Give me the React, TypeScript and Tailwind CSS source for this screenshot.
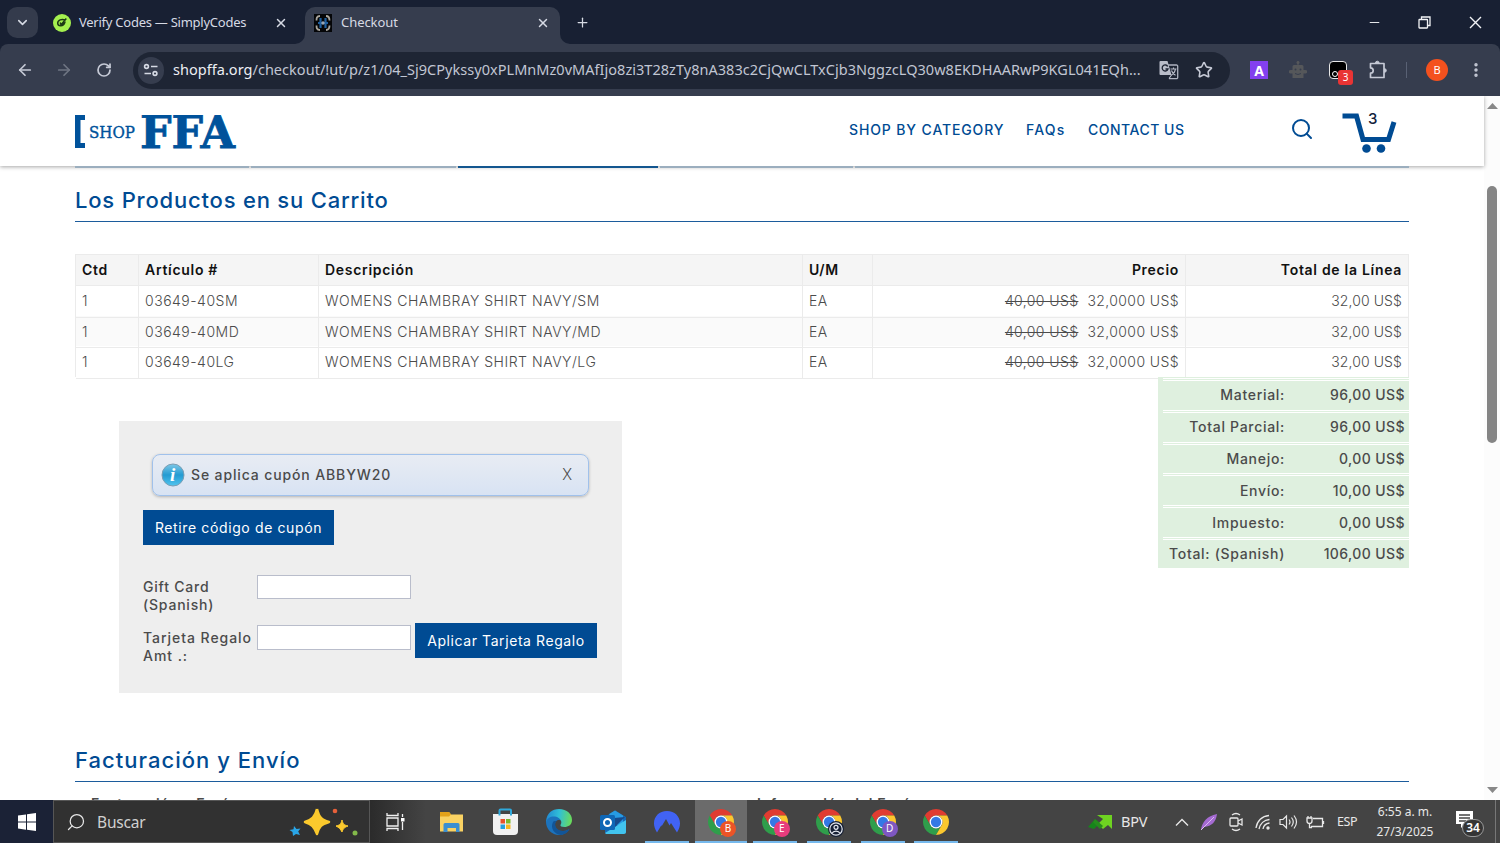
import type { ReactNode } from 'react';
import { ChevronDown, X, Plus, ArrowLeft, ArrowRight, RotateCw, Star, Minus, Search, EllipsisVertical } from 'lucide-react';

const URL_PATH = '/checkout/!ut/p/z1/04_Sj9CPykssy0xPLMnMz0vMAfIjo8zi3T28zTy8nA383c2CjQwCLTxCjb3NggzcLQ30w8EKDHAARwP9KGL041EQh...';

const items = [
  { qty: '1', sku: '03649-40SM', name: 'WOMENS CHAMBRAY SHIRT NAVY/SM' },
  { qty: '1', sku: '03649-40MD', name: 'WOMENS CHAMBRAY SHIRT NAVY/MD' },
  { qty: '1', sku: '03649-40LG', name: 'WOMENS CHAMBRAY SHIRT NAVY/LG' },
];

const totals = [
  { label: 'Material:', value: '96,00 US$' },
  { label: 'Total Parcial:', value: '96,00 US$' },
  { label: 'Manejo:', value: '0,00 US$' },
  { label: 'Envío:', value: '10,00 US$' },
  { label: 'Impuesto:', value: '0,00 US$' },
  { label: 'Total: (Spanish)', value: '106,00 US$' },
];

const COLS = 'grid grid-cols-[63px_180px_484px_70px_313px_223px]';

function TabStrip() {
  return (
    <div className="flex h-11 bg-[#182033] text-[#d6dae4]">
      <div className="mt-[7px] ml-[7px] flex h-[31px] w-[31px] items-center justify-center rounded-[10px] bg-[#343b4c]">
        <ChevronDown size={15} strokeWidth={2.5} />
      </div>
      <div className="flex w-[267px] items-center pt-px pl-[15px]">
        <svg width="18" height="18" viewBox="0 0 18 18">
          <circle cx="9" cy="9" r="9" fill="#a4f04f" />
          <path d="M12 6.2c-3-1.8-7.500 0-7.300 3.200.3 3.400 5.800 3.100 7-.6L8 10.800 7.200 8.600M8.300 10.500l5-6" fill="none" stroke="#1c3a14" strokeWidth="1.500" />
        </svg>
        <span className="ml-2 text-[13px] tracking-[-0.25px]">Verify Codes — SimplyCodes</span>
        <X size={14} strokeWidth={2.5} className="ml-auto mr-[17px]" />
      </div>
      <div className="relative mt-[7px] flex h-[37px] w-[255px] items-center rounded-t-[10px] bg-[#363d4e] pb-[6px] pl-[9px]">
        <svg width="10" height="10" className="absolute bottom-0 -left-[10px]"><path d="M10 0v10H0A10 10 0 0 0 10 0" fill="#363d4e" /></svg>
        <svg width="10" height="10" className="absolute -right-[10px] bottom-0"><path d="M0 0v10h10A10 10 0 0 1 0 0" fill="#363d4e" /></svg>
        <svg width="18" height="18" viewBox="0 0 18 18">
          <rect width="18" height="18" fill="#050608" />
          <path d="M6 2C2.500 2 2.500 4.500 2.500 6.500M12 2c3.500 0 3.500 2.500 3.500 4.500M6 16c-3.500 0-3.500-2.500-3.500-4.500M12 16c3.500 0 3.500-2.500 3.500-4.500" fill="none" stroke="#a9a59c" strokeWidth="1.800" />
          <path d="M6.500 4v10M11.500 4v10M4 9h10" stroke="#1f5f9f" strokeWidth="2.200" />
          <circle cx="9" cy="9" r="1.700" fill="#9aa7b5" />
        </svg>
        <span className="ml-[9px] text-[13px] tracking-[-0.05px]">Checkout</span>
        <X size={14} strokeWidth={2.5} className="ml-auto mr-[10px]" />
      </div>
      <Plus size={15} strokeWidth={2} className="mt-[15px] ml-[15px]" />
      <div className="mt-[15px] ml-auto mr-[18px] flex text-[#f2f3f6]">
        <Minus size={15} strokeWidth={1.5} />
        <svg width="13" height="13" viewBox="0 0 13 13" className="mt-px ml-[36px]" fill="none" stroke="currentColor" strokeWidth="1.3">
          <rect x="1" y="3.500" width="8.500" height="8.500" rx="0.5" />
          <path d="M3.500 3.500V1H12v8.500H9.500" />
        </svg>
        <svg width="13" height="13" viewBox="0 0 13 13" className="mt-px ml-[38px]" stroke="currentColor" strokeWidth="1.4"><path d="M1 1l11 11M12 1 1 12" /></svg>
      </div>
    </div>
  );
}

function Toolbar() {
  return (
    <div className="bg-[#182033]">
      <div className="flex h-[52px] items-center rounded-t-[8px] bg-[#363d4e] text-[#c6cad6]">
        <ArrowLeft size={18} strokeWidth={2.3} className="ml-4" />
        <ArrowRight size={18} strokeWidth={2.3} className="ml-[21px] text-[#6f7583]" />
        <RotateCw size={16} strokeWidth={2.6} className="ml-[23px]" />
        <div className="ml-[21px] flex h-[37px] w-[1097px] items-center rounded-full bg-[#1e2534]">
          <div className="ml-[5px] flex h-[27px] w-[26px] items-center justify-center rounded-full bg-[#363d4e]">
            <svg width="16" height="16" viewBox="0 0 16 16" fill="none" stroke="#d6dae4" strokeWidth="1.600">
              <circle cx="3.500" cy="4.500" r="1.900" /><path d="M8 4.500h6.500M1.500 11.500H8" /><circle cx="12" cy="11.500" r="1.900" />
            </svg>
          </div>
          <div className="ml-[9px] w-[986px] whitespace-nowrap text-[14.5px] tracking-[0.03px] text-[#c1c6d3]">
            <span className="text-[#eceef3]">shopffa.org</span>{URL_PATH}
          </div>
          <svg width="20" height="20" viewBox="0 0 20 20" fill="none">
            <path d="M8 5h9.500a1.200 1.200 0 0 1 1.200 1.200v11.300a1.200 1.200 0 0 1-1.200 1.200H10" stroke="#aeb3c0" strokeWidth="1.300" />
            <path d="M1.500 1h7l4 14h-11A1 1 0 0 1 .5 14V2a1 1 0 0 1 1-1" fill="#b9bdc9" />
            <path d="M8.800 6.500A3 3 0 1 0 9 9H6.500" stroke="#1e2534" strokeWidth="1.300" />
            <path d="M11.500 9h6M14.500 7.500V9M16.500 9c-.5 3-2 5-4 6M12.500 10.500c.7 2 2 3.800 4 4.800M10 18.500l2.500-3.500" stroke="#b9bdc9" strokeWidth="1.100" />
          </svg>
          <Star size={18} strokeWidth={2.1} className="ml-[16px]" />
        </div>
        <div className="ml-5 flex h-[18px] w-[18px] items-center justify-center bg-[#8340ef] text-[14px] font-bold text-white">A</div>
        <svg width="18" height="18" viewBox="0 0 18 18" className="ml-[21px]">
          <path d="M8.400 0h1.200v4H13a1.500 1.500 0 0 1 1.500 1.500V9h2a1 1 0 0 1 0 3.500h-2V17h-11v-4.500h-2a1 1 0 0 1 0-3.500h2V5.500A1.500 1.500 0 0 1 5 4h3.400z" fill="#55575a" />
          <circle cx="9" cy="1.500" r="1.500" fill="#55575a" />
          <circle cx="6.500" cy="8.500" r="1" fill="#363d4e" /><circle cx="11.500" cy="8.500" r="1" fill="#363d4e" />
          <path d="M6 12.500q3 2 6 0" fill="none" stroke="#363d4e" />
        </svg>
        <div className="relative ml-[22px] h-[18px] w-[18px] rounded-[4px] border-[1.5px] border-[#e8e8e8] bg-black">
          <span className="absolute bottom-[1px] left-[2px] h-[6px] w-[6px] rounded-full border border-white" />
          <span className="absolute top-[8px] left-[8px] flex h-[15px] w-[15px] items-center justify-center rounded-[3px] bg-[#e93434] text-[10px] text-white">3</span>
        </div>
        <svg width="20" height="20" viewBox="0 0 20 20" className="ml-[21px]" fill="none" stroke="currentColor" strokeWidth="1.700" strokeLinejoin="round">
          <path d="M2.500 3.500H16v14H2.500v-4.300a2.700 2.700 0 0 0 0-5.400z" />
          <path d="M7.500 3a1.800 1.800 0 0 1 3.600 0zM16.500 8.700a1.800 1.800 0 0 1 0 3.600z" fill="currentColor" strokeWidth="1" />
        </svg>
        <div className="ml-[18px] h-4 w-px bg-[#596174]" />
        <div className="ml-[19px] flex h-[22px] w-[22px] items-center justify-center rounded-full bg-[#f4511e] text-[11px] text-white">B</div>
        <EllipsisVertical size={18} strokeWidth={2.6} className="ml-[19px]" />
      </div>
    </div>
  );
}

function SiteHeader() {
  return (
    <header className="relative z-10 flex h-[70px] w-[1484px] items-center bg-white pl-[75px] font-medium text-[#004b93] shadow-[0_1px_4px_rgba(0,0,0,0.35)]">
      <svg width="162" height="36" viewBox="0 0 162 36" fill="#00529b" className="mt-[3px]">
        <path d="M0 0h10v5H5.500v23H10v5H0z" />
        <text x="14" y="22.500" fontFamily="'DejaVu Serif', serif" fontSize="16.500" stroke="#00529b" strokeWidth="0.4" textLength="46" lengthAdjust="spacingAndGlyphs">SHOP</text>
        <text x="65" y="32.500" fontFamily="'DejaVu Serif', serif" fontWeight="bold" fontSize="44.500" stroke="#00529b" strokeWidth="0.8" textLength="95" lengthAdjust="spacingAndGlyphs">FFA</text>
      </svg>
      <nav className="-mt-1 ml-[612px] flex whitespace-nowrap text-[14px]">
        <span className="w-[177px] tracking-[0.87px]">SHOP BY CATEGORY</span>
        <span className="w-[62px] tracking-[1.2px]">FAQs</span>
        <span className="w-[202px] tracking-[0.5px]">CONTACT US</span>
      </nav>
      <Search size={24} strokeWidth={2} className="-mt-1" />
      <div className="relative ml-7">
        <svg width="56" height="42" viewBox="0 0 56 42" className="mt-1">
          <path d="M.5 4h14l6.500 23.500H46.500L52 10" fill="none" stroke="#004b93" strokeWidth="5" />
          <circle cx="24.500" cy="36.500" r="4.300" fill="#004b93" /><circle cx="39" cy="36.500" r="4.300" fill="#004b93" />
        </svg>
        <span className="absolute top-0 left-[26px] text-[15px] text-[#13233c]">3</span>
      </div>
    </header>
  );
}

function CartTable() {
  const cell = 'border-r border-b border-[#ebebeb] px-[6px]';
  return (
    <div className="border-t border-l border-[#ebebeb] text-[14px] text-[#4b4b4b]">
      <div className={`${COLS} h-[30px] bg-[#f5f5f5] leading-[30px] font-semibold tracking-[0.7px] text-[#111]`}>
        <div className={cell}>Ctd</div>
        <div className={cell}>Artículo #</div>
        <div className={cell}>Descripción</div>
        <div className={cell}>U/M</div>
        <div className={`${cell} text-right`}>Precio</div>
        <div className={`${cell} text-right`}>Total de la Línea</div>
      </div>
      {items.map((item) => (
        <div key={item.sku} className={`${COLS} h-[30.67px] leading-[31.5px] font-light tracking-[0.5px] odd:bg-[#fafafa]`}>
          <div className={cell}>{item.qty}</div>
          <div className={cell}>{item.sku}</div>
          <div className={`${cell} tracking-[0.53px]`}>{item.name}</div>
          <div className={cell}>EA</div>
          <div className={`${cell} text-right tracking-[0.4px]`}><span className="mr-[9px] line-through">40,00 US$</span>32,0000 US$</div>
          <div className={`${cell} text-right tracking-[0.1px]`}>32,00 US$</div>
        </div>
      ))}
    </div>
  );
}

function CouponPanel() {
  return (
    <div className="mt-11 ml-11 h-[272px] w-[503px] bg-[#eee] pt-[33px] pl-6 text-[14px] text-[#4b4b4b]">
      <div className="ml-[9px] flex h-[42px] w-[437px] items-center rounded-[8px] border border-[#a0c1eb] bg-linear-to-b from-[#e8ecf3] to-[#d8e3f3] pr-[16px] pl-2 shadow-[0_1px_3px_rgba(0,0,0,0.25)]">
        <svg width="24" height="24" viewBox="0 0 24 24">
          <defs><linearGradient id="info" x1="0" y1="0" x2="0" y2="1"><stop stopColor="#7cc7e7" /><stop offset=".5" stopColor="#249bd2" /><stop offset="1" stopColor="#50c4ef" /></linearGradient></defs>
          <circle cx="12" cy="12" r="11" fill="url(#info)" stroke="#7a9db3" />
          <text x="9" y="18" fill="#fff" fontFamily="'Liberation Serif', serif" fontSize="19" fontWeight="bold" fontStyle="italic">i</text>
        </svg>
        <span className="ml-[6px] font-medium tracking-[0.87px]">Se aplica cupón ABBYW20</span>
        <span className="ml-auto font-[Roboto] text-[16px] font-light">X</span>
      </div>
      <button className="mt-[14px] block h-[35px] w-[191px] bg-[#004b93] tracking-[0.62px] text-white">Retire código de cupón</button>
      <div className="mt-[30px] flex font-medium">
        <label className="mt-[3px] w-[114px] leading-[18px] tracking-[0.8px]">Gift Card<br />(Spanish)</label>
        <input className="h-6 w-[154px] border border-[#b9bdcb] bg-white" />
      </div>
      <div className="mt-[9px] flex">
        <label className="mt-[6px] w-[114px] leading-[18px] font-medium tracking-[0.95px] whitespace-nowrap">Tarjeta Regalo<br />Amt .:</label>
        <input className="mt-[2px] h-[25px] w-[154px] border border-[#b9bdcb] bg-white" />
        <button className="ml-1 h-[35px] w-[182px] bg-[#004b93] tracking-[0.58px] text-white">Aplicar Tarjeta Regalo</button>
      </div>
    </div>
  );
}

function Totals() {
  return (
    <div className="h-[191px] w-[251px] bg-[#dff0df] pt-px pl-[5px] text-[14px] font-medium text-[#4b4b4b]">
      {totals.map((row) => (
        <div key={row.label} className="flex h-[31.8px] items-center justify-end border-t-[3px] border-double border-white pr-[4px] pb-px">
          <span className="tracking-[0.7px]">{row.label}</span>
          <span className="w-[120px] text-right tracking-[0.4px]">{row.value}</span>
        </div>
      ))}
    </div>
  );
}

function Page() {
  return (
    <div className="flex h-[704px] overflow-hidden bg-white font-[Inter]">
      <div className="w-[1484px]">
        <SiteHeader />
        {/* Checkout steps, mostly hidden below the header */}
        <div className="relative z-20 ml-[75px] flex h-[2px] w-[1334px] gap-[2px]">
          <div className="h-[1.5px] w-[174px] bg-[#9baebe]" />
          <div className="h-[1.5px] w-[205px] bg-[#9baebe]" />
          <div className="h-[1.5px] w-[200px] bg-[#13568f]" />
          <div className="h-[1.5px] w-[193px] bg-[#9baebe]" />
          <div className="h-[1.5px] flex-1 bg-[#9baebe]" />
        </div>
        <main className="ml-[75px] w-[1334px]">
          <h2 className="h-[54px] border-b border-[#1c5c9c] pt-[17px] text-[22px] leading-[31px] font-medium tracking-[0.8px] text-[#004b93]">Los Productos en su Carrito</h2>
          <div className="mt-8"><CartTable /></div>
          <div className="flex items-start justify-between">
            <CouponPanel />
            <Totals />
          </div>
          <h2 className="mt-[50px] h-[39px] border-b border-[#1c5c9c] pt-[2px] text-[22px] leading-[31px] font-medium tracking-[1.02px] text-[#004b93]">Facturación y Envío</h2>
          <div className="mt-[12px] flex pl-4 text-[14px] leading-5 font-semibold tracking-[0.7px] text-[#4b4b4b]">
            <span className="w-[666px]">Facturación y Envío</span>
            <span>Información del Envío</span>
          </div>
        </main>
      </div>
      <div className="flex w-4 flex-col items-center bg-[#fcfcfc] pt-[7px] pb-[7px]">
        <svg width="11" height="6"><path d="M0 6 5.500 0 11 6z" fill="#888" /></svg>
        <div className="mt-[77px] h-[257px] w-[10px] rounded-full bg-[#858585]" />
        <svg width="11" height="6" className="mt-auto"><path d="M0 0h11L5.500 6z" fill="#888" /></svg>
      </div>
    </div>
  );
}

function Chrome({ badge, color }: { badge?: ReactNode; color?: string }) {
  return (
    <div className="relative h-[26px] w-[26px]">
      <svg width="26" height="26" viewBox="2 2 44 44">
        <path d="M4.950 13A22 22 0 0 1 43.050 13H24a11 11 0 0 0-9.530 16.500z" fill="#e03c31" />
        <path d="M4.950 13l9.520 16.500a11 11 0 0 0 19.060 0L24 46A22 22 0 0 1 4.950 13" fill="#2f9e4b" />
        <path d="M43.050 13A22 22 0 0 1 24 46l9.530-16.500A11 11 0 0 0 24 13z" fill="#fbc72e" />
        <circle cx="24" cy="24" r="11" fill="#fff" /><circle cx="24" cy="24" r="8.700" fill="#3478e5" />
      </svg>
      {badge && (
        <span className="absolute top-[12px] left-[12px] flex h-4 w-4 items-center justify-center rounded-full text-[10px] text-white" style={{ background: color }}>{badge}</span>
      )}
    </div>
  );
}

const person = (
  <svg width="16" height="16" viewBox="0 0 16 16" fill="none" stroke="#e4e8f0" strokeWidth="1.200">
    <circle cx="8" cy="8" r="6.200" /><circle cx="8" cy="6.300" r="2" /><path d="M4 12.300c1.500-3 6.500-3 8 0" />
  </svg>
);

const apps: { id: string; icon: ReactNode; open?: boolean; active?: boolean }[] = [
  {
    id: 'explorer',
    icon: (
      <svg width="25" height="22" viewBox="0 0 25 22">
        <path d="M1 1h9l2 2.500h12v17H1z" fill="#f9d263" /><path d="M1 1h9l2 2.500-2 2H1z" fill="#e3a21a" />
        <path d="M4.500 21v-7.500a1.500 1.500 0 0 1 1.500-1.500h13a1.500 1.500 0 0 1 1.500 1.500V21H17v-4H8.500v4z" fill="#3b8fd1" />
      </svg>
    ),
  },
  {
    id: 'store',
    icon: (
      <svg width="27" height="28" viewBox="0 0 27 28">
        <path d="M1 6h25v17a4 4 0 0 1-4 4H5a4 4 0 0 1-4-4z" fill="#f1f1f1" />
        <path d="M7.500 7.500V2.500A1 1 0 0 1 8.500 1.500h9.500a1 1 0 0 1 1 1v5" fill="none" stroke="#2fa9dc" strokeWidth="2" />
        <path d="M8.500 11h4.500v4.500H8.500z" fill="#e8512c" /><path d="M14 11h4.500v4.500H14z" fill="#7db82b" />
        <path d="M8.500 16.500h4.500V21H8.500z" fill="#26a0df" /><path d="M14 16.500h4.500V21H14z" fill="#f6b721" />
      </svg>
    ),
  },
  {
    id: 'edge',
    icon: (
      <svg width="28" height="28" viewBox="0 0 28 28">
        <defs><linearGradient id="edge" x1="0" y1=".3" x2="1" y2=".4"><stop stopColor="#2087d3" /><stop offset=".5" stopColor="#30bfd7" /><stop offset="1" stopColor="#6adb5a" /></linearGradient></defs>
        <path d="M1 13C2 5 7 1 14 1c8 0 13 5 13 11 0 5-4 7-7.500 7-3 0-4.500-1-4-2 2-3 .5-7-5-7S2 13 1 16z" fill="url(#edge)" />
        <path d="M1 14c1-4 5-6 9-5.500 3 .4 5 2 5.500 4-3-1.500-6 1-5.500 5 .5 5 7 8 14.500 3.500C22 25 18 27 14 27 7 27 1 21 1 14" fill="#1c73bd" />
        <path d="M8 14c-3 6 1 12 8 13 4-.3 7-3 8.500-6-7 4-13 1-14-3-.6-2 0-4 1-5-1.500-.2-3 0-3.500 1" fill="#125598" />
      </svg>
    ),
  },
  {
    id: 'outlook',
    icon: (
      <svg width="28" height="28" viewBox="0 0 28 28">
        <path d="M6 9 16 2.500 27 9v16H6z" fill="#1769b5" /><path d="M11 5.500 16 2.500l8 5V17H9V8z" fill="#279be3" />
        <path d="M6 25 27 12v12a2 2 0 0 1-2 2H7z" fill="#42c4ee" /><path d="M15 10l11-1-11 11z" fill="#174a8c" />
        <rect x="1" y="7" width="15" height="15" rx="1.500" fill="#0f67b6" />
        <circle cx="8.500" cy="14.500" r="3.500" fill="none" stroke="#fff" strokeWidth="2" />
      </svg>
    ),
  },
  {
    id: 'vpn',
    open: true,
    icon: (
      <svg width="28" height="26" viewBox="0 0 28 26"><path d="M4 23.500C-3 13 3 2 14 2s17 11 10 21.500L18 14l-1.500 2.500L13 10l-4.500 7.500L8.500 16z" fill="#4163f4" /></svg>
    ),
  },
  { id: 'b', open: true, active: true, icon: <Chrome badge="B" color="#ec5427" /> },
  { id: 'e', open: true, icon: <Chrome badge="E" color="#e73c7d" /> },
  { id: 'guest', open: true, icon: <Chrome badge={person} color="#172035" /> },
  { id: 'd', open: true, icon: <Chrome badge="D" color="#7e57c2" /> },
  { id: 'chrome', open: true, icon: <Chrome /> },
];

function Taskbar() {
  return (
    <div className="relative z-30 flex h-[43px] items-center bg-[#444] text-[#e8e8e8]">
      <div className="flex h-full w-[53px] items-center justify-center bg-[#1b2236]">
        <svg width="18" height="18" viewBox="0 0 18 18" fill="#fff"><path d="M0 2.500 8 1.400v7.200H0zM9 1.200 18 0v8.600H9zM0 9.500h8v7.200l-8-1.100zM9 9.500h9V18l-9-1.200z" /></svg>
      </div>
      <div className="flex h-full w-[317px] items-center border border-[#565656] bg-[#313131] pl-3">
        <Search size={20} strokeWidth={1.5} className="-scale-x-100" />
        <span className="mt-[2px] ml-[11px] text-[15.5px] tracking-[-0.2px] text-[#d0d0d0]">Buscar</span>
        <svg width="70" height="32" viewBox="0 0 70 32" className="ml-auto mr-[10px]">
          <path d="M28 3c2 8 4 10.500 12 13-8 2.500-10 4.500-12 12-3-7.500-5-9.500-12-12 7-2.500 10-5 12-13" fill="#fbc92d" stroke="#fbc92d" strokeWidth="2.500" strokeLinejoin="round" />
          <path d="M53 14c1 4 2 5 6 6-4 1.500-5 3-6 6-1.500-3-3-4.500-6-6 4-1 5-2 6-6" fill="#fbc92d" stroke="#fbc92d" strokeLinejoin="round" />
          <path d="M5 20l2.500 3 4-.5-2.300 3L11 29l-4-1-3 2-.5-4-3-2 4-.7z" fill="#2aa6e8" />
          <circle cx="46" cy="5" r="2.300" fill="#e7603a" /><circle cx="66" cy="27" r="2.500" fill="#83b94a" />
        </svg>
      </div>
      <div className="flex h-full w-[55.500px] items-center bg-linear-to-r from-[#2b2b2b] to-[#444] pl-[15px]">
        <svg width="20" height="20" viewBox="0 0 20 20" fill="none" stroke="#f0f0f0" strokeWidth="1.300">
          <path d="M2 1v2.500h11V1M2 19v-2.500h11V19M2 6h11v8H2zM17.500 2v3M17.500 10v8" /><path d="M16 6h3.500v3.500H16z" fill="#fff" stroke="none" />
        </svg>
      </div>
      <div className="flex h-full gap-[2px]">
        {apps.map((app) => (
          <div key={app.id} className={`relative flex h-full w-[51.9px] items-center justify-center ${app.active ? 'bg-[#6b6b6b]' : ''}`}>
            {app.icon}
            {app.open && <span className={`absolute bottom-0 h-[2px] bg-[#76b9ed] ${app.active ? 'w-full' : 'w-11'}`} />}
          </div>
        ))}
      </div>
      <div className="ml-auto flex h-full items-center">
        <svg width="25" height="16" viewBox="0 0 25 16">
          <path d="M0 13 7 5l5 4-6 6-3-1z" fill="#16851b" /><path d="M9 1h15v14l-4-4-5 4-5-5 5-5z" fill="#6ed321" /><path d="M7 5l8 7-3 3-7-7z" fill="#258c1c" />
        </svg>
        <span className="ml-2 w-[54px] text-[14.5px] tracking-[-0.2px]">BPV</span>
        <svg width="14" height="8" viewBox="0 0 14 8" fill="none" stroke="currentColor" strokeWidth="1.400"><path d="M1 7.500 7 1.500l6 6" /></svg>
        <svg width="18" height="18" viewBox="0 0 18 18" className="ml-[11px]"><path d="M1 17C2 9 7 3 17 1c-1 8-5 12-13 13z" fill="#a56bd2" /><path d="M1 17 14 4" stroke="#dcb8f3" /></svg>
        <svg width="14" height="20" viewBox="0 0 14 20" className="ml-[11px]" fill="none" stroke="currentColor" strokeWidth="1.300"><rect x="1" y="6" width="8" height="8" rx="1" /><path d="M9 9l4-2v6l-4-2M3 3q4-3 8 0M3 17q4 3 8 0" /></svg>
        <svg width="16" height="16" viewBox="0 0 16 16" className="ml-[12px]" fill="none" stroke="currentColor" strokeWidth="1.300"><path d="M1 14C2 7 7 2 14 1.500M4 15c1-5 5-9 10.500-9.500M8 15c.5-3 3-5.500 6.500-6" /><circle cx="13" cy="14" r="1.700" fill="currentColor" stroke="none" /></svg>
        <svg width="19" height="16" viewBox="0 0 19 16" className="ml-2" fill="none" stroke="currentColor" strokeWidth="1.200"><path d="M1 5.500h3L7.500 2v12L4 10.500H1zM10 5.500q2 2.500 0 5M12.500 3.500q3.500 4.500 0 9M15 1.500q5 6.500 0 13" /></svg>
        <svg width="19" height="14" viewBox="0 0 19 14" className="ml-2" fill="none" stroke="currentColor" strokeWidth="1.300"><path d="M7 3.500h9.500v8H5M17.500 6v3M1 3h5v3a2.500 2.500 0 0 1-5 0zM2 1v2M5 1v2M3.500 8.500v4H6" /></svg>
        <span className="mt-px ml-[12px] w-[38px] text-[12.5px] tracking-[-0.45px]">ESP</span>
        <div className="w-[60px] text-center text-[12px] leading-[20px] whitespace-nowrap">
          <div>6:55 a. m.</div>
          <div>27/3/2025</div>
        </div>
        <div className="relative mr-[11px] ml-[20px] h-[24px] w-[29px]">
          <svg width="19" height="18" viewBox="0 0 19 18"><path d="M1 1h17v13h-8l-4 4v-4H1z" fill="#fff" /><path d="M4 5h11M4 8h11M4 11h7" stroke="#444" strokeWidth="1.300" /></svg>
          <span className="absolute top-[9px] left-[7px] flex h-[18px] w-[22px] items-center justify-center rounded-full border border-[#999] bg-[#353535] text-[12px] font-semibold text-white">34</span>
        </div>
        <div className="mr-[4px] h-full w-px bg-[#777]" />
      </div>
    </div>
  );
}

export default function App() {
  return (
    <div className="h-[843px] w-[1500px] overflow-hidden font-['Noto_Sans',sans-serif]">
      <TabStrip />
      <Toolbar />
      <Page />
      <Taskbar />
    </div>
  );
}
